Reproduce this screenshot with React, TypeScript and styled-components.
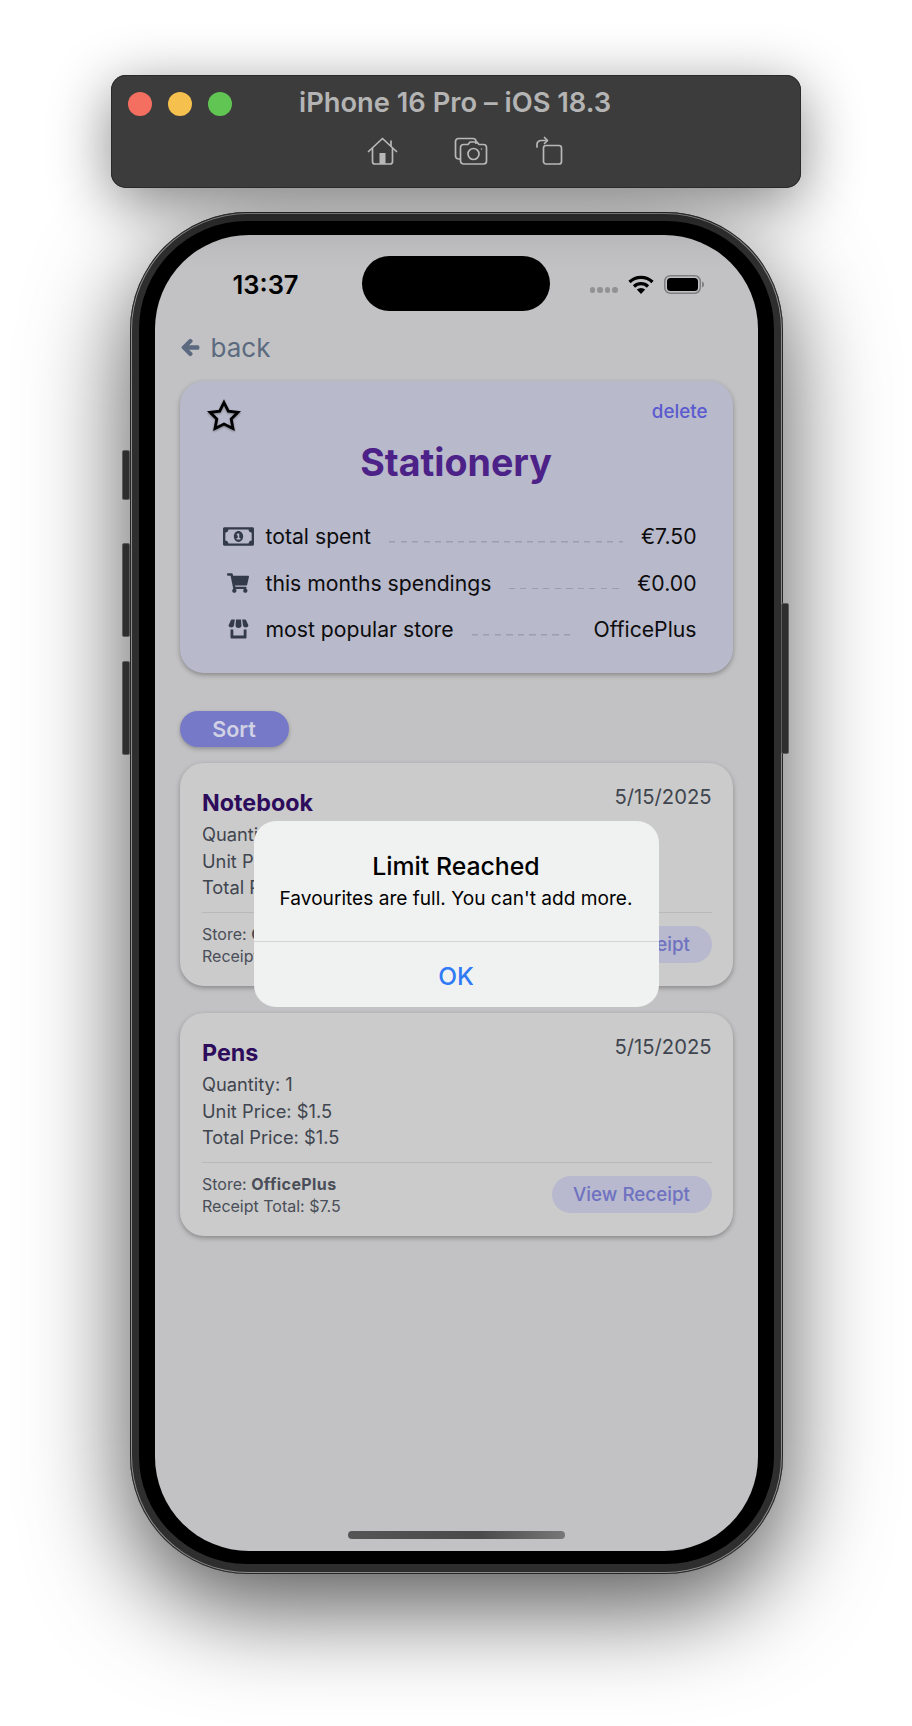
import { ReactNode } from 'react'
import styled, { createGlobalStyle } from 'styled-components'
import { FaArrowLeft, FaRegMoneyBillAlt, FaShoppingCart } from 'react-icons/fa'

const GlobalStyle = createGlobalStyle`
	html, body {
		margin: 0;
		padding: 0;
		background: #ffffff;
		font-family: 'Inter', 'Liberation Sans', sans-serif;
	}
`

const Page = styled.div`
	width: 912px;
	height: 1726px;
	overflow: hidden;
	display: flex;
	flex-direction: column;
	align-items: center;
	padding-top: 75px;
	box-sizing: border-box;
`

const SimBar = styled.div`
	position: relative;
	z-index: 2;
	width: 690px;
	height: 113px;
	margin-bottom: 24px;
	box-sizing: border-box;
	padding: 17px 0 0 17px;
	background: #3c3c3c;
	border-radius: 15px;
	box-shadow: inset 0 0 0 1px #2a2a2a, 0 14px 60px rgba(0, 0, 0, 0.48);
`

const SimTop = styled.div`
	display: flex;
	align-items: center;
	height: 24px;
	gap: 16px;
`

const Light = styled.span<{ $color: string }>`
	width: 24px;
	height: 24px;
	border-radius: 50%;
	background: ${p => p.$color};
`

const SimTitle = styled.div`
	margin: -3px 0 0 51px;
	font-size: 27.3px;
	font-weight: 600;
	color: #b4b4b4;
	white-space: nowrap;
`

const SimTools = styled.div`
	display: flex;
	align-items: center;
	gap: 48px;
	margin: 20px 0 0 239px;
	svg:first-child {
		margin-right: 8px;
	}
`

const Phone = styled.div`
	position: relative;
	z-index: 1;
	width: 653px;
	height: 1362px;
	box-sizing: border-box;
	padding: 9px 9px 10px;
	background: #2e2e2e;
	border-radius: 118px;
	box-shadow: inset 0 0 0 1px #262626, inset 0 0 0 2px #8d8d8d, 0 32px 100px rgba(0, 0, 0, 0.68);
`

const SideButton = styled.span<{ $top: number; $height: number; $right?: boolean }>`
	position: absolute;
	top: ${p => p.$top}px;
	height: ${p => p.$height}px;
	width: 8px;
	background: #2e2e2e;
	border: 1px solid #5c5c5c;
	box-sizing: border-box;
	border-radius: 2px;
	${p => (p.$right ? 'right: -6px;' : 'left: -8px;')}
`

const Bezel = styled.div`
	height: 100%;
	box-sizing: border-box;
	padding: 14px 16px 13px;
	background: #000000;
	border-radius: 108px;
`

const Screen = styled.div`
	position: relative;
	height: 100%;
	overflow: hidden;
	background: #c2c2c4;
	border-radius: 94px;
`

const StatusBar = styled.div`
	display: flex;
	align-items: center;
	justify-content: space-between;
	height: 98px;
	padding: 0 54px 0 78px;
`

const Clock = styled.div`
	font-size: 25.5px;
	font-weight: 600;
	color: #000000;
`

const Island = styled.div`
	position: absolute;
	top: 21px;
	left: 207px;
	width: 188px;
	height: 55px;
	border-radius: 28px;
	background: #000000;
`

const StatusIcons = styled.div`
	display: flex;
	align-items: center;
	gap: 10px;
`

const SignalDots = styled.div`
	display: flex;
	gap: 2px;
	margin-top: 12px;
`

const SignalDot = styled.span`
	width: 5.5px;
	height: 5.5px;
	border-radius: 50%;
	background: #929294;
`

const BackRow = styled.div`
	display: flex;
	align-items: center;
	gap: 11px;
	height: 28px;
	margin-bottom: 20px;
	padding-left: 26px;
	font-size: 26px;
	color: #5c6a80;
	svg {
		stroke: currentColor;
		stroke-width: 36px;
	}
`

const SummaryCard = styled.div`
	width: 553px;
	height: 292px;
	margin-left: 25px;
	box-sizing: border-box;
	padding: 18px 27px;
	background: #b8b9ca;
	border-radius: 24px;
	box-shadow: 0 2px 5px rgba(0, 0, 0, 0.3);
`

const CardHead = styled.div`
	display: flex;
	justify-content: space-between;
	height: 31px;
	svg {
		filter: drop-shadow(0 1px 1px rgba(0, 0, 0, 0.35));
	}
`

const DeleteLink = styled.span`
	margin-right: -2px;
	font-size: 18.8px;
	font-weight: 500;
	line-height: 26px;
	color: #5b5bd0;
`

const CardTitle = styled.div`
	margin-top: 11px;
	font-size: 37.6px;
	font-weight: 700;
	line-height: 44px;
	text-align: center;
	color: #4c2288;
`

const StatList = styled.div`
	margin-top: 28px;
	padding: 0 9px 0 16px;
`

const StatRow = styled.div`
	display: flex;
	align-items: center;
	height: 46.5px;
	font-size: 21.2px;
	color: #0c0c0e;
`

const StatIcon = styled.span`
	display: flex;
	justify-content: center;
	width: 31px;
	margin-right: 12px;
	color: #333a4a;
`

const Dashes = styled.span`
	flex: 1;
	height: 13px;
	margin: 0 18px;
	background: repeating-linear-gradient(90deg, #9d9eac 0 6px, transparent 6px 11.5px) left bottom / 100% 1.5px no-repeat;
`

const SortButton = styled.div`
	display: flex;
	align-items: center;
	justify-content: center;
	width: 109px;
	height: 36px;
	margin: 38px 0 16px 25px;
	border-radius: 18px;
	background: #7679c8;
	font-size: 21.5px;
	font-weight: 600;
	color: #d0d1e4;
	box-shadow: 0 2px 4px rgba(0, 0, 0, 0.25);
`

const ItemCard = styled.div`
	width: 553px;
	height: 223px;
	margin: 0 0 27px 25px;
	box-sizing: border-box;
	padding: 20px 21px 0 22.5px;
	background: #cbcbcb;
	border-radius: 24px;
	box-shadow: 0 2px 5px rgba(0, 0, 0, 0.3);
`

const ItemHead = styled.div`
	display: flex;
	justify-content: space-between;
	height: 38px;
`

const ItemName = styled.div`
	font-size: 23.3px;
	font-weight: 700;
	line-height: 39px;
	color: #2e0c5c;
`

const ItemDate = styled.div`
	font-size: 20.2px;
	line-height: 28px;
	color: #40454f;
`

const ItemLine = styled.div`
	font-size: 18.3px;
	line-height: 26.5px;
	color: #40454f;
`

const ItemFooter = styled.div`
	display: flex;
	align-items: center;
	justify-content: space-between;
	margin-top: 11px;
	padding-top: 10px;
	border-top: 1px solid #b9b9b9;
`

const StoreLine = styled.div`
	font-size: 16px;
	line-height: 22px;
	color: #4a4e58;
	b {
		font-weight: 700;
		letter-spacing: 0.4px;
	}
`

const ReceiptButton = styled.div`
	display: flex;
	align-items: center;
	justify-content: center;
	width: 160px;
	height: 37px;
	border-radius: 19px;
	background: #b8b9ce;
	font-size: 18.8px;
	font-weight: 500;
	color: #6e72c0;
`

const Alert = styled.div`
	position: absolute;
	top: 586px;
	left: 99px;
	width: 405px;
	height: 186px;
	display: flex;
	flex-direction: column;
	align-items: center;
	border-radius: 22px;
	background: #f0f1f1;
	color: #000000;
`

const AlertTitle = styled.div`
	margin-top: 29px;
	font-size: 24.8px;
	font-weight: 500;
	line-height: 32px;
`

const AlertMessage = styled.div`
	margin-top: 3px;
	font-size: 19.1px;
	line-height: 26px;
`

const AlertAction = styled.div`
	align-self: stretch;
	margin-top: 30px;
	height: 66px;
	box-sizing: border-box;
	padding-top: 3px;
	display: flex;
	align-items: center;
	justify-content: center;
	border-top: 1px solid #d4d4d6;
	font-size: 24.5px;
	font-weight: 500;
	color: #2f7bf6;
`

const HomeIndicator = styled.div`
	position: absolute;
	left: 193px;
	bottom: 12px;
	width: 217px;
	height: 8px;
	border-radius: 4px;
	background: linear-gradient(90deg, #555555, #4a4a4a 60%, #777777);
`

const HomeIcon = () => (
	<svg width='31' height='28' viewBox='0 0 31 28' fill='none' stroke='#b8b8b8' strokeWidth='1.7' strokeLinecap='round' strokeLinejoin='round'>
		<path d='M1.5 14.5 15.5 1.5l14 13' />
		<path d='M24 4v5' />
		<path d='M5.5 11.5V24.5a2.5 2.5 0 0 0 2.5 2.5h15a2.5 2.5 0 0 0 2.5-2.5V11.5' />
		<rect x='12.5' y='16' width='6' height='11' fill='#b8b8b8' stroke='none' />
	</svg>
)

const CameraIcon = () => (
	<svg width='34' height='28' viewBox='0 0 34 28' fill='none' stroke='#b8b8b8' strokeWidth='1.7' strokeLinejoin='round'>
		<path d='M6 22H4.5A3 3 0 0 1 1.5 19V4.5A3 3 0 0 1 4.5 1.5H19A3 3 0 0 1 22 4.5V7' />
		<path d='M9.5 7.5H14l2-2.5h7l2 2.5h4.5a3 3 0 0 1 3 3V24a3 3 0 0 1-3 3H9.5a3 3 0 0 1-3-3V10.5a3 3 0 0 1 3-3z' />
		<circle cx='19.5' cy='17' r='5.5' />
		<circle cx='27.5' cy='12' r='0.8' fill='#b8b8b8' stroke='none' />
	</svg>
)

const RotateIcon = () => (
	<svg width='27' height='29' viewBox='0 0 27 29' fill='none' stroke='#b8b8b8' strokeWidth='1.7' strokeLinecap='round' strokeLinejoin='round'>
		<rect x='7.5' y='9.5' width='18' height='18.5' rx='2.5' />
		<path d='M1 11V8.5A4 4 0 0 1 5 4.5H10' />
		<path d='M8.5 1.5 11.5 4.5 8.5 7.5' />
	</svg>
)

const WifiIcon = () => (
	<svg width='26' height='19' viewBox='0 0 26 19' fill='none' stroke='#000000' strokeWidth='3.2'>
		<path d='M1.5 7a16.5 16.5 0 0 1 23 0' />
		<path d='M6 11.5a10 10 0 0 1 14 0' />
		<path d='M13 19 8.8 14.6a6 6 0 0 1 8.4 0z' fill='#000000' stroke='none' />
	</svg>
)

const BatteryIcon = () => (
	<svg width='40' height='19' viewBox='0 0 40 19'>
		<rect x='0.75' y='0.75' width='35.5' height='17.5' rx='5.5' fill='none' stroke='#7f7f81' strokeWidth='1.5' />
		<rect x='3' y='3' width='31' height='13' rx='3.5' fill='#000000' />
		<path d='M38 6.5c1.3.4 2 1.5 2 3s-.7 2.6-2 3z' fill='#7f7f81' />
	</svg>
)

const StarIcon = () => (
	<svg width='34' height='33' viewBox='0 0 34 33' fill='none' stroke='#000000' strokeWidth='2.8' strokeLinejoin='miter'>
		<path d='M17 3.5 21.3 12.2 31 13.3 24.2 20 26 29.5 17 25 8 29.5 9.8 20 3 13.3 12.7 12.2z' />
	</svg>
)

const StoreIcon = () => (
	<svg width='21' height='20' viewBox='0 0 21 20' fill='currentColor'>
		<path d='M0.5 6.5 3 1a1 1 0 0 1 1-.5h2.8L6 6.5a2.8 2.4 0 0 1-5.5 0z' />
		<path d='M8 .5h5L13.5 6.5a3 2.4 0 0 1-6 0z' />
		<path d='M20.5 6.5 18 1a1 1 0 0 0-1-.5h-2.8L15 6.5a2.8 2.4 0 0 0 5.5 0z' />
		<path d='M2.5 10.5V18.5a1 1 0 0 0 1 1h14a1 1 0 0 0 1-1V10.5h-2.8V16.5H5.3V10.5z' />
	</svg>
)

const Stat = ({ icon, label, value }: { icon: ReactNode; label: string; value: string }) => (
	<StatRow>
		<StatIcon>{icon}</StatIcon>
		<span>{label}</span>
		<Dashes />
		<span>{value}</span>
	</StatRow>
)

type Item = {
	name: string
	quantity: number
	unit: string
	total: string
}

const items: Item[] = [
	{ name: 'Notebook', quantity: 2, unit: '$3', total: '$6' },
	{ name: 'Pens', quantity: 1, unit: '$1.5', total: '$1.5' },
]

const App = () => (
	<Page>
		<GlobalStyle />
		<SimBar>
			<SimTop>
				<Light $color='#f46f60' />
				<Light $color='#f6c04f' />
				<Light $color='#61c554' />
				<SimTitle>iPhone 16 Pro – iOS 18.3</SimTitle>
			</SimTop>
			<SimTools>
				<HomeIcon />
				<CameraIcon />
				<RotateIcon />
			</SimTools>
		</SimBar>
		<Phone>
			<SideButton $top={238} $height={50} />
			<SideButton $top={331} $height={94} />
			<SideButton $top={449} $height={94} />
			<SideButton $top={391} $height={151} $right />
			<Bezel>
				<Screen>
					<StatusBar>
						<Clock>13:37</Clock>
						<StatusIcons>
							<SignalDots>
								<SignalDot />
								<SignalDot />
								<SignalDot />
								<SignalDot />
							</SignalDots>
							<WifiIcon />
							<BatteryIcon />
						</StatusIcons>
					</StatusBar>
					<Island />
					<BackRow>
						<FaArrowLeft size={19} />
						back
					</BackRow>
					<SummaryCard>
						<CardHead>
							<StarIcon />
							<DeleteLink>delete</DeleteLink>
						</CardHead>
						<CardTitle>Stationery</CardTitle>
						<StatList>
							<Stat icon={<FaRegMoneyBillAlt size={31} />} label='total spent' value='€7.50' />
							<Stat icon={<FaShoppingCart size={22} />} label='this months spendings' value='€0.00' />
							<Stat icon={<StoreIcon />} label='most popular store' value='OfficePlus' />
						</StatList>
					</SummaryCard>
					<SortButton>Sort</SortButton>
					{items.map(item => (
						<ItemCard key={item.name}>
							<ItemHead>
								<ItemName>{item.name}</ItemName>
								<ItemDate>5/15/2025</ItemDate>
							</ItemHead>
							<ItemLine>Quantity: {item.quantity}</ItemLine>
							<ItemLine>Unit Price: {item.unit}</ItemLine>
							<ItemLine>Total Price: {item.total}</ItemLine>
							<ItemFooter>
								<div>
									<StoreLine>
										Store: <b>OfficePlus</b>
									</StoreLine>
									<StoreLine>Receipt Total: $7.5</StoreLine>
								</div>
								<ReceiptButton>View Receipt</ReceiptButton>
							</ItemFooter>
						</ItemCard>
					))}
					<Alert>
						<AlertTitle>Limit Reached</AlertTitle>
						<AlertMessage>Favourites are full. You can't add more.</AlertMessage>
						<AlertAction>OK</AlertAction>
					</Alert>
					<HomeIndicator />
				</Screen>
			</Bezel>
		</Phone>
	</Page>
)

export default App
